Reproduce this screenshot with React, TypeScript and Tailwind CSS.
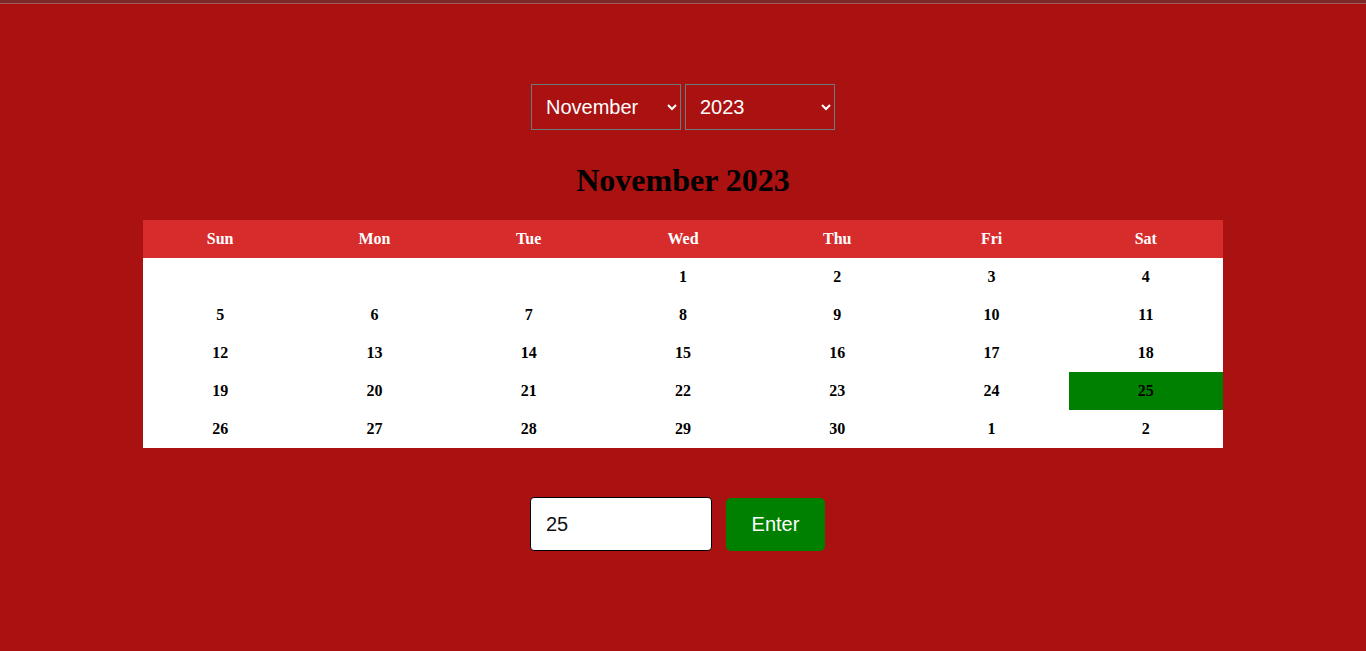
import React, { useState } from 'react';

const MONTHS = [
  'January', 'February', 'March', 'April', 'May', 'June',
  'July', 'August', 'September', 'October', 'November', 'December',
];
const DAYS = ['Sun', 'Mon', 'Tue', 'Wed', 'Thu', 'Fri', 'Sat'];

// 月のカレンダーを週ごとに作る
const buildWeeks = (month: number, year: number) => {
  const first = new Date(year, month, 1).getDay();
  const total = new Date(year, month + 1, 0).getDate();
  const cells: { day: number; current: boolean }[] = [];
  for (let i = 0; i < first; i++) cells.push({ day: 0, current: false });
  for (let d = 1; d <= total; d++) cells.push({ day: d, current: true });
  let next = 1;
  while (cells.length % 7 !== 0) cells.push({ day: next++, current: false });
  const weeks = [];
  for (let i = 0; i < cells.length; i += 7) weeks.push(cells.slice(i, i + 7));
  return weeks;
};

const App: React.FC = () => {
  const [month, setMonth] = useState(10);
  const [year, setYear] = useState(2023);
  const [input, setInput] = useState('25');
  const [selected, setSelected] = useState(25);

  const weeks = buildWeeks(month, year);

  return (
    <div className="min-h-[651px] bg-[#aa1111] font-['Liberation_Sans',Arial,sans-serif]">
      <div className="h-[3px] bg-[#7e2a2a]" />
      <div className="h-px bg-[#a55757]" />

      <div className="flex flex-col items-center pt-[80px]">
        {/* 月と年の選択 */}
        <div className="flex gap-[4px]">
          <select
            value={month}
            onChange={(e) => setMonth(Number(e.target.value))}
            className="h-[46px] w-[150px] border border-[#6b7b7b] bg-[#aa1111] pl-[10px] pr-[8px] text-[20px] text-white outline-none"
          >
            {MONTHS.map((m, i) => (
              <option key={m} value={i}>{m}</option>
            ))}
          </select>
          <select
            value={year}
            onChange={(e) => setYear(Number(e.target.value))}
            className="h-[46px] w-[150px] border border-[#6b7b7b] bg-[#aa1111] pl-[10px] pr-[8px] text-[20px] text-white outline-none"
          >
            {[2020, 2021, 2022, 2023, 2024, 2025].map((y) => (
              <option key={y} value={y}>{y}</option>
            ))}
          </select>
        </div>

        <h1 className="mt-[32px] mb-[21px] font-['Liberation_Serif','Times_New_Roman',serif] text-[32px] leading-[37px] font-bold text-black">
          {MONTHS[month]} {year}
        </h1>

        {/* カレンダー */}
        <table className="w-[1080px] table-fixed border-collapse bg-white font-['Liberation_Serif','Times_New_Roman',serif] text-[16px] font-bold">
          <thead>
            <tr className="bg-[#d72c2c] text-white">
              {DAYS.map((d) => (
                <th key={d} className="h-[38px] p-0 text-center">{d}</th>
              ))}
            </tr>
          </thead>
          <tbody>
            {weeks.map((week, wi) => (
              <tr key={wi}>
                {week.map((c, ci) => (
                  <td
                    key={ci}
                    className={`h-[38px] p-0 text-center text-black ${
                      c.current && c.day === selected ? 'bg-[#008000]' : ''
                    }`}
                  >
                    {wi === 0 && !c.current ? '' : c.day}
                  </td>
                ))}
              </tr>
            ))}
          </tbody>
        </table>

        {/* 日付入力 */}
        <div className="mt-[49px] flex items-center gap-[14px] pr-[11px]">
          <input
            value={input}
            onChange={(e) => setInput(e.target.value)}
            className="h-[54px] w-[182px] rounded-[4px] border border-black bg-white px-[15px] text-[20px] text-[#111] outline-none"
          />
          <button
            type="button"
            onClick={() => setSelected(Number(input))}
            className="h-[53px] w-[99px] rounded-[5px] bg-[#008000] text-[20px] text-white"
          >
            Enter
          </button>
        </div>
      </div>
    </div>
  );
};

export default App;
